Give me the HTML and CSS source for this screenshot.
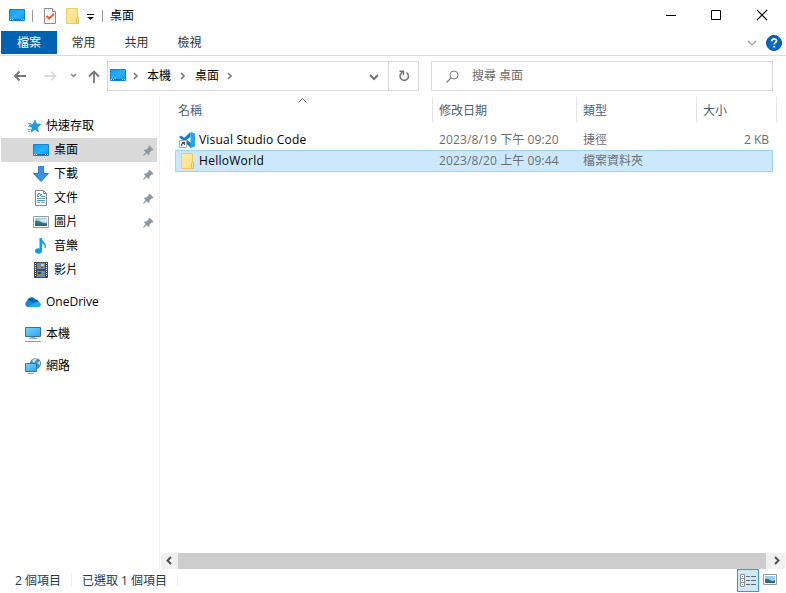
FILE: index.html
```html
<!DOCTYPE html>
<html lang="zh-Hant">
<head>
<meta charset="utf-8">
<title>桌面</title>
<link rel="stylesheet" href="styles.css">
</head>
<body>
<svg class="defs" aria-hidden="true">
  <defs>
    <linearGradient id="blue" x1="0" y1="0" x2="1" y2="1"><stop offset="0" stop-color="#0aa0f8"/><stop offset=".55" stop-color="#2bafff"/><stop offset="1" stop-color="#0798f4"/></linearGradient>
    <linearGradient id="screen" x1="0" y1="0" x2="1" y2="1"><stop offset="0" stop-color="#7ad4ff"/><stop offset="1" stop-color="#2ba5f2"/></linearGradient>
    <linearGradient id="fold" x1="0" y1="0" x2="1" y2="1"><stop offset="0" stop-color="#ffeca6"/><stop offset="1" stop-color="#ffdf7c"/></linearGradient>
    <symbol id="desktop" viewBox="0 0 16 16"><path d="M.5 1.500h15v11H.5z" fill="url(#blue)" stroke="#0f83cf"/><path d="M1 11.500h14" stroke="#0a74c0"/><path d="M1 11.500h1M3 11.500h1M12 11.500h1M14 11.500h1" stroke="#dff4ff"/></symbol>
    <symbol id="folder" viewBox="0 0 16 16"><path d="M1.500.5h11v9h1v6h-12z" fill="url(#fold)" stroke="#ecca60"/><path d="M11.500 15.500v-5l1-1h1v6z" fill="#ffe9a0" stroke="#e4bd4d"/></symbol>
    <symbol id="picture" viewBox="0 0 16 16"><path d="M.5 2.500h15v11H.5z" fill="#fff" stroke="#969a9e"/><path d="M2 4h12v8H2z" fill="#9bcdf0"/><path d="M2 7q3-1 6 1t6 1v3H2z" fill="#3d7568"/><path d="M2 10.500h12V12H2z" fill="#2a5f9c"/><path d="M6 6.500q4-2 8-1v2q-4 1-8-1z" fill="#dceff6"/></symbol>
    <symbol id="pin" viewBox="0 0 11 11"><path d="M6.500.5l4 4-1 1h-1l-2 2v2l-1 .5L3.800 8.200 1 10.800H.2V10L2.800 7.200 1 5.500l.5-1h2l2-2v-1z" fill="#8a98a3"/></symbol>
    <symbol id="crumb" viewBox="0 0 6 8"><path d="M1 1l3 3-3 3" fill="none" stroke="#777" stroke-width="1.600"/></symbol>
  </defs>
</svg>
<div class="window">
  <header class="titlebar">
    <svg class="i16 t-desk"><use href="#desktop"/></svg>
    <i class="sep s1"></i>
    <svg class="i16 t-check" viewBox="0 0 16 16"><path d="M2.500.5h8l3 3v12h-11z" fill="#f8f8f8" stroke="#8c8c8c"/><path d="M10.500.5v3h3" fill="#fff" stroke="#8c8c8c"/><path d="M4.500 8l2.500 2.500L12 6" fill="none" stroke="#ef5428" stroke-width="1.800"/></svg>
    <svg class="i16 t-fold"><use href="#folder"/></svg>
    <svg class="t-menu" viewBox="0 0 7 6"><path d="M0 .5h7" stroke="#111"/><path d="M0 3h7L3.500 6z" fill="#111"/></svg>
    <i class="sep s2"></i>
    <span class="t-title">桌面</span>
    <svg class="controls" viewBox="0 0 102 12" fill="none" stroke="#000"><path d="M0 6.500h10M45.500 1.500h9v9h-9z"/><path d="M91 1l10 10M101 1L91 11" stroke-width="1.100"/></svg>
  </header>
  <nav class="tabs">
    <span class="file">檔案</span><span>常用</span><span>共用</span><span>檢視</span>
    <svg class="collapse" viewBox="0 0 10 6"><path d="M1 1l4 4 4-4" fill="none" stroke="#999" stroke-width="1.200"/></svg>
    <svg class="help" viewBox="0 0 16 16"><circle cx="8" cy="8" r="7.500" fill="#0067c5" stroke="#06519a"/><path d="M5.700 6.300c0-3.300 4.800-3.200 4.800-.4 0 1.800-2.300 1.700-2.300 3.600" fill="none" stroke="#fff" stroke-width="1.700"/><path d="M7.300 10.800h1.900v1.700H7.300z" fill="#fff"/></svg>
  </nav>
  <div class="navrow">
    <svg class="arrows" viewBox="0 0 92 16" fill="none" stroke-width="1.800"><path d="M6.500 3.500L2 8l4.500 4.500M2 8h11" stroke="#777"/><path d="M38 3.500L42.500 8 38 12.500M42 8H31" stroke="#dedede"/><path d="M58 6l2.500 2.500L63 6" stroke="#888" stroke-width="1.500"/><path d="M76 8.500l5-5 5 5M81 3.500V15" stroke="#777"/></svg>
    <div class="address">
      <svg class="i16"><use href="#desktop"/></svg><svg class="cr c1"><use href="#crumb"/></svg><span>本機</span><svg class="cr c2"><use href="#crumb"/></svg><span>桌面</span><svg class="cr c3"><use href="#crumb"/></svg>
      <svg class="drop" viewBox="0 0 10 7"><path d="M1 1l4 4 4-4" fill="none" stroke="#737373" stroke-width="2"/></svg>
      <div class="refresh"><svg viewBox="0 0 12 12"><path d="M8.600 2.700A4.200 4.200 0 1 1 3.400 3.100L5 1.500" fill="none" stroke="#737373" stroke-width="1.600"/><path d="M1.500 1.200h4v4" fill="none" stroke="#737373" stroke-width="1.400"/></svg></div>
    </div>
    <div class="search"><svg viewBox="0 0 13 13"><path d="M.5 12.500L5 8" stroke="#777" stroke-width="1.100"/><circle cx="8" cy="5" r="4" fill="none" stroke="#777"/></svg><span>搜尋 桌面</span></div>
  </div>
  <main class="body">
    <aside class="tree">
      <div class="row root"><svg class="i16" viewBox="0 0 16 16"><path d="M9 2l1.500 4L15 6.200l-3.500 3 1 4.800L9 11.500 5 14l1.200-4.300L3 7l4-.7z" fill="#249de8" stroke="#1683ca" stroke-width=".6"/><path d="M2 5.500h3M2 8.500h3M1 11.500h4M2 13.500h2" stroke="#58bdf4"/></svg><span>快速存取</span></div>
      <div class="row sel"><svg class="i16"><use href="#desktop" y="1"/></svg><span>桌面</span><svg class="pin"><use href="#pin"/></svg></div>
      <div class="row"><svg class="i16" viewBox="0 0 16 16"><path d="M5.500.5h5v7h5L8 15.500.5 7.500h5z" fill="#3694e6" stroke="#2a7dcc"/></svg><span>下載</span><svg class="pin"><use href="#pin"/></svg></div>
      <div class="row"><svg class="i16" viewBox="0 0 16 16"><path d="M2.500.5h8l3 3v12h-11z" fill="#fff" stroke="#858585"/><path d="M10.500.5v3h3" fill="none" stroke="#858585"/><path d="M4 6.500h2M7 4.500h2M8 6.500h4M4 10.500h8" stroke="#3d94d5"/><path d="M4 8.500h8M4 12.500h3M8 12.500h4" stroke="#839aaa"/><path d="M4 6l2-3 2 3" fill="none" stroke="#2c93dc"/></svg><span>文件</span><svg class="pin"><use href="#pin"/></svg></div>
      <div class="row"><svg class="i16"><use href="#picture"/></svg><span>圖片</span><svg class="pin"><use href="#pin"/></svg></div>
      <div class="row"><svg class="i16" viewBox="0 0 16 16"><ellipse cx="5.500" cy="13" rx="3.500" ry="2.700" fill="#1599eb"/><path d="M6.500 0H9c0 4 5 4.600 3.700 10h-1.200c.5-3-1-4-2.500-4.500V13H6.500z" fill="#159deb"/></svg><span>音樂</span></div>
      <div class="row"><svg class="i16" viewBox="0 0 16 16"><path d="M1 0h14v16H1z" fill="#4a4a4a"/><path d="M2.500 1v14M13.500 1v14" stroke="#fff" stroke-dasharray="1 1"/><path d="M4 1h8v6H4zM4 9h8v6H4z" fill="#578fd5"/><path d="M5 4h6v2H5zM5 12h6v2H5z" fill="#a98248"/><path d="M8 2h3v2H8z" fill="#efcf41"/><path d="M8 5h2v1H8z" fill="#c73929"/><path d="M5 10h3v2H5z" fill="#243f84"/></svg><span>影片</span></div>
      <div class="row top"><svg class="i16" viewBox="0 0 16 16"><path d="M2 7.500A4.600 4.600 0 0 1 10.500 5.500q3 0 3.500 3L8 12z" fill="#0868bb"/><path d="M3.500 13A3.100 3.100 0 0 1 3.500 6.800q2 0 4 1.500L13 13z" fill="#1687d9"/><path d="M3 12.800L10.300 8.600A3 3 0 0 1 13 8a2.600 2.600 0 0 1 .3 5.200H4z" fill="#28a8ea"/></svg><span>OneDrive</span></div>
      <div class="row top"><svg class="i16" viewBox="0 0 16 16"><path d="M.5 1.500h15v9H.5z" fill="url(#screen)" stroke="#33749a"/><path d="M6 11h4v1H6z" fill="#9bacb7"/><path d="M4 12.500h8M0 15.500h16" stroke="#8fa1b4"/></svg><span>本機</span></div>
      <div class="row top"><svg class="i16" viewBox="0 0 16 16"><circle cx="10.500" cy="5.500" r="5.500" fill="#4c91b3"/><path d="M7 3q3-4 5-2L9 5zM12 5l3-2v4z" fill="#c8e3e9"/><path d="M.5 5.500h11v8H.5z" fill="url(#screen)" stroke="#287aac"/><path d="M3 15.500h6" stroke="#90a4b4"/></svg><span>網路</span></div>
    </aside>
    <section class="files">
      <div class="head"><span>名稱</span><span>修改日期</span><span>類型</span><span>大小</span><svg class="sort" viewBox="0 0 9 5"><path d="M.5 4.500l4-4 4 4" fill="none" stroke="#666"/></svg></div>
      <div class="item"><span class="name"><svg class="i16" viewBox="0 0 16 16"><path d="M0 5l2-1.500L12 11v5z" fill="#0a7fc8"/><path d="M11.500 0v5L2 12l-2-1.500z" fill="#0f84ca"/><path d="M11.500 0L16 1.500v13L11.500 16z" fill="#2aa5ed"/><path d="M.5 8.500h7v7h-7z" fill="#fff" stroke="#aaa"/><path d="M2.500 14v-1.500L5.500 10M3 10.500h2.500V13" fill="none" stroke="#24578b" stroke-width="1.200"/></svg><b class="vs">Visual Studio Code</b></span><span><b class="date">2023/8/19 下午 09:20</b></span><span>捷徑</span><span class="size">2 KB</span></div>
      <div class="item chosen"><span class="name"><svg class="i16 shift"><use href="#folder"/></svg><b class="hw">HelloWorld</b></span><span><b class="date">2023/8/20 上午 09:44</b></span><span>檔案資料夾</span><span></span></div>
      <div class="scroll"><svg viewBox="0 0 17 16"><path d="M10 4L6.500 7.500 10 11" fill="none" stroke="#505050" stroke-width="2"/></svg><i></i><svg class="right" viewBox="0 0 19 16"><path d="M9 4l3.500 3.500L9 11" fill="none" stroke="#505050" stroke-width="2"/></svg></div>
    </section>
  </main>
  <footer class="status"><span class="count">2 個項目</span><span class="picked">已選取 1 個項目</span>
    <div class="view"><svg class="i16" viewBox="0 0 16 14"><path d="M.5.5h4v12h-4zM.5 4.500h4M.5 8.500h4" fill="#fff" stroke="#8b8b8b"/><path d="M6 2.500h4m1 0h5M6 6.500h4m1 0h5M6 10.500h4m1 0h5" stroke="#5f6970"/><path d="M2 2h1v1H2zM2 6h1v1H2zM2 10h1v1H2z" fill="#6285a0"/></svg></div><svg class="thumb" viewBox="0 0 14 11"><path d="M.5.500h13v10H.5z" fill="#fff" stroke="#969a9e"/><path d="M2 2h10v7H2z" fill="#9bcdf0"/><path d="M2 5q3-1 5 1t5 0v3H2z" fill="#3d7568"/><path d="M2 7.500h10V9H2z" fill="#2a5f9c"/></svg>
  </footer>
</div>
</body>
</html>
```
FILE: styles.css
```css
* { box-sizing: border-box; }
body { margin: 0; background: #fff; color: #000; font: 12px/16px "Open Sans", "Noto Sans CJK TC", sans-serif; overflow: hidden; }
svg { display: block; flex: none; }
b { font-weight: 400; }
.defs { position: absolute; width: 0; height: 0; }
.i16 { width: 16px; height: 16px; }
.window { width: 786px; height: 593px; display: flex; flex-direction: column; white-space: nowrap; }

.titlebar { height: 31px; display: flex; align-items: center; padding-left: 9px; }
.sep { width: 1px; height: 12px; background: #9a9a9a; }
.s1 { margin-left: 7px; }
.t-check { margin-left: 9px; }
.t-fold { margin-left: 7px; }
.t-menu { width: 7px; height: 6px; margin: 3px 0 0 6px; }
.s2 { margin-left: 8px; }
.t-title { margin-left: 7px; }
.controls { width: 102px; height: 12px; margin: 0 18px 1px auto; }

.tabs { height: 25px; display: flex; align-items: flex-start; border-bottom: 1px solid #dadbdc; padding-left: 1px; color: #333; }
.tabs span { width: 53px; height: 23px; line-height: 23px; text-align: center; }
.tabs .file { width: 56px; background: #0063b1; color: #fff; }
.collapse { width: 10px; height: 6px; margin: 9px 9px 0 auto; }
.help { width: 16px; height: 16px; margin: 4px 4px 0 0; }

.navrow { height: 40px; display: flex; padding: 5px 13px 0 0; }
.arrows { width: 92px; height: 16px; margin: 7px 2px 0 13px; }
.address { width: 312px; height: 30px; border: 1px solid #d9d9d9; display: flex; align-items: center; padding-left: 2px; }
.cr { width: 6px; height: 8px; }
.c1 { margin: 0 8px 0 7px; }
.c2 { margin: 0 9px 0 9px; }
.c3 { margin-left: 8px; }
.drop { width: 10px; height: 7px; margin: 2px 9px 0 auto; }
.refresh { width: 30px; height: 28px; border-left: 1px solid #d9d9d9; padding: 8px 0 0 9px; }
.refresh svg { width: 12px; height: 12px; }
.search { width: 342px; height: 30px; margin-left: 12px; border: 1px solid #d9d9d9; display: flex; align-items: center; padding-left: 14px; color: #6d6d6d; }
.search svg { width: 13px; height: 13px; margin-right: 13px; }

.body { height: 473px; display: flex; }
.tree { width: 160px; padding: 18px 2px 0 1px; border-right: 1px solid #f1f1f1; }
.row { height: 24px; display: flex; align-items: center; padding: 0 3px 0 32px; gap: 5px; }
.row.root { padding-left: 25px; gap: 4px; }
.row.top { height: 24px; margin-top: 8px; padding-left: 24px; }
.sel { background: #d9d9d9; }
.pin { width: 11px; height: 11px; margin-left: auto; }

.files { flex: 1; display: flex; flex-direction: column; padding-left: 2px; position: relative; }
.head, .item { display: grid; grid-template-columns: 257px 144px 120px 80px; margin-left: 13px; }
.head { height: 28px; color: #4c607a; align-items: start; margin: 1px 0 0 14px; }
.head span { height: 26px; padding: 6px 0 0 6px; border-right: 1px solid #e5e5e5; line-height: 15px; }
.head span:first-child { padding-left: 2px; }
.sort { position: absolute; left: 138px; top: 2px; width: 9px; height: 5px; }
.item { width: 598px; height: 22px; align-items: center; border: 1px solid transparent; color: #6d6d6d; margin-top: 4px; }
.item > span { padding-left: 6px; }
.item .name { display: flex; align-items: center; gap: 4px; padding-left: 3px; color: #000; }
.vs { letter-spacing: .2px; }
.hw { letter-spacing: .28px; }
.date { letter-spacing: .12px; }
.shift { margin: 0 -1px 0 1px; }
.item.chosen { margin-top: -1px; background: #cce8ff; border-color: #99d1ff; }
.item .size { padding: 0 8px 0 0; text-align: right; }
.scroll { height: 16px; display: flex; margin: auto 1px 0 -1px; background: #f0f0f0; }
.scroll svg { width: 17px; height: 16px; }
.scroll .right { width: 19px; }
.scroll i { flex: 1; background: #cdcdcd; }

.status { height: 24px; display: flex; align-items: flex-start; color: #1e395b; padding: 0 9px 0 15px; }
.count { width: 57px; border-right: 1px solid #ededed; height: 13px; line-height: 13px; margin-top: 5px; }
.picked { width: 106px; padding-left: 10px; border-right: 1px solid #ededed; height: 13px; line-height: 13px; margin-top: 5px; }
.view { width: 22px; height: 23px; margin: 0 4px 0 auto; background: #cde8f6; border: 1px solid #26a0da; display: flex; align-items: center; justify-content: center; }
.view svg { height: 14px; }
.thumb { width: 14px; height: 11px; margin-top: 5px; }
```
